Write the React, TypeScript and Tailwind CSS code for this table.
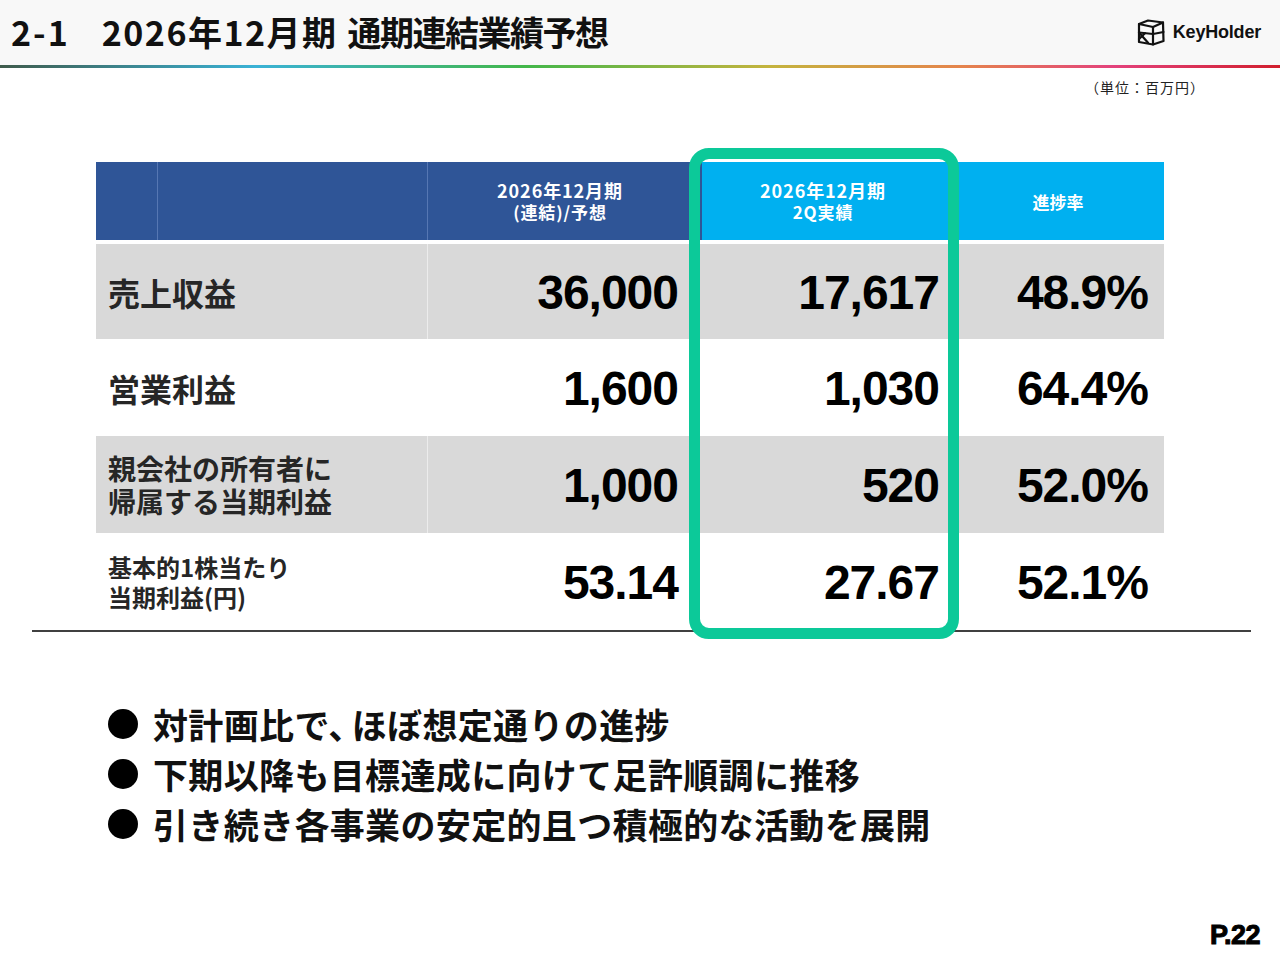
import React from "react";

const jp = { fontFamily: '"Noto Sans CJK JP", "Noto Sans", sans-serif' };
const num = { fontFamily: '"Liberation Sans", Arial, sans-serif' };

function Logo() {
  return (
    <div className="flex items-center gap-[7px]">
      <svg width="30" height="29" viewBox="0 0 30 29" fill="none" stroke="#111" strokeWidth="2.2" strokeLinejoin="round" strokeLinecap="round">
        <path d="M3 6 L12 2.5 L27 4.5 L27.5 23 L17 26.5 L3 24 Z" />
        <path d="M3 6 L17 9 L27 4.5" />
        <path d="M17 9 L17 26.5" />
        <path d="M3 14.5 L17 16 L27.5 14" />
        <path d="M3 14.5 L12 24.8" />
        <path d="M9 15.2 L3 21" />
      </svg>
      <span className="text-[18px] font-bold text-[#111] tracking-[-0.2px]" style={num}>KeyHolder</span>
    </div>
  );
}

type Row = { label: React.ReactNode; a: string; b: string; c: string; gray: boolean; labelCls: string; h: string };

const rows: Row[] = [
  { label: "売上収益", a: "36,000", b: "17,617", c: "48.9%", gray: true, labelCls: "text-[32px] leading-[40px]", h: "h-[95px]" },
  { label: "営業利益", a: "1,600", b: "1,030", c: "64.4%", gray: false, labelCls: "text-[32px] leading-[40px]", h: "h-[97px]" },
  {
    label: (
      <>
        <div>親会社の所有者に</div>
        <div>帰属する当期利益</div>
      </>
    ),
    a: "1,000",
    b: "520",
    c: "52.0%",
    gray: true,
    labelCls: "text-[28px] leading-[33px]",
    h: "h-[97px]",
  },
  {
    label: (
      <>
        <div>基本的1株当たり</div>
        <div>当期利益(円)</div>
      </>
    ),
    a: "53.14",
    b: "27.67",
    c: "52.1%",
    gray: false,
    labelCls: "text-[24px] leading-[30px]",
    h: "h-[97px]",
  },
];

const numCls = "flex items-center justify-end text-[48px] font-bold text-black leading-none pt-[2px] tracking-[-1px]";

export default function App() {
  return (
    <div className="w-[1280px] h-[960px] bg-white flex flex-col overflow-hidden" style={jp}>
      <header className="h-[65px] bg-[#f8f8f8] flex items-center justify-between pl-[11px] pr-[19px]">
        <h1 className="text-[34px] font-bold text-[#111] leading-none flex items-center pb-[1px]">
          <span className="tracking-[2px]">2-1</span>
          <span className="ml-[32px] tracking-[1.5px]">2026年12月期</span>
          <span className="ml-[10px] tracking-[-1.5px]">通期連結業績予想</span>
        </h1>
        <Logo />
      </header>
      <div className="h-[3px] bg-[linear-gradient(90deg,#3f5b4b_0%,#3ab2d6_20%,#42b74a_41%,#c4b43e_60%,#e5854c_75%,#e3427c_87%,#d11f2e_100%)]" />
      <div className="flex justify-end pr-[75px] mt-[10px] text-[14px] leading-[19px] text-[#222] tracking-[1px]">（単位：百万円）</div>

      <div className="relative ml-[96px] w-[1068px] mt-[65px]">
        <div className="grid grid-cols-[62px_270px_274px_244px_218px] h-[78px] text-white text-[18px] font-bold leading-[21px]">
          <div className="bg-[#2f5597] border-r border-[#5677b3]" />
          <div className="bg-[#2f5597] border-r border-[#5677b3]" />
          <div className="bg-[#2f5597] flex flex-col items-center justify-center tracking-[0.05em] pr-[10px]">
            <div>2026年12月期</div>
            <div className="text-[17px]">(連結)/予想</div>
          </div>
          <div className="bg-[#00b0f0] flex flex-col items-center justify-center tracking-[0.05em] pr-[2px]">
            <div>2026年12月期</div>
            <div className="text-[17px]">2Q実績</div>
          </div>
          <div className="bg-[#00b0f0] flex items-center justify-center text-[17px] pl-[6px]">進捗率</div>
        </div>
        <div className="h-[4px]" />
        {rows.map((r, i) => (
          <div key={i} className={`grid grid-cols-[332px_274px_244px_218px] ${r.h} ${r.gray ? "bg-[#d9d9d9]" : "bg-white"}`}>
            <div className={`flex items-center pl-[12px] font-bold text-[#262626] ${r.labelCls} ${r.gray ? "border-r border-[#ececec]" : ""}`}>
              <div>{r.label}</div>
            </div>
            <div className={`${numCls} pr-[24px]`} style={num}>
              {r.a}
            </div>
            <div className={`${numCls} pr-[7px]`} style={num}>
              {r.b}
            </div>
            <div className={`${numCls} pr-[16px]`} style={num}>
              {r.c}
            </div>
          </div>
        ))}
        <div className="absolute left-[593px] top-[-14px] w-[270px] h-[491px] border-[11px] border-[#0cc999] rounded-[20px] pointer-events-none" />
      </div>
      <div className="ml-[32px] w-[1219px] h-[2px] bg-[#404040]" />

      <ul className="ml-[108px] mt-[67px] flex flex-col text-[35px] leading-[50px] font-bold text-[#111]">
        <li className="flex items-center">
          <span className="w-[30px] h-[30px] rounded-full bg-black shrink-0" />
          <span className="ml-[15px] tracking-[0.01em]">
            対計画比で<span className="mr-[-12px]">、</span>ほぼ想定通りの進捗
          </span>
        </li>
        <li className="flex items-center">
          <span className="w-[30px] h-[30px] rounded-full bg-black shrink-0" />
          <span className="ml-[15px] tracking-[0.01em]">下期以降も目標達成に向けて足許順調に推移</span>
        </li>
        <li className="flex items-center">
          <span className="w-[30px] h-[30px] rounded-full bg-black shrink-0" />
          <span className="ml-[15px] tracking-[0.01em]">引き続き各事業の安定的且つ積極的な活動を展開</span>
        </li>
      </ul>

      <div className="mt-auto flex justify-end pr-[20px] pb-[10px]">
        <span className="text-[27px] font-bold leading-[30px] text-black tracking-[-0.5px] [-webkit-text-stroke:1px_#000]" style={num}>
          P.22
        </span>
      </div>
    </div>
  );
}
